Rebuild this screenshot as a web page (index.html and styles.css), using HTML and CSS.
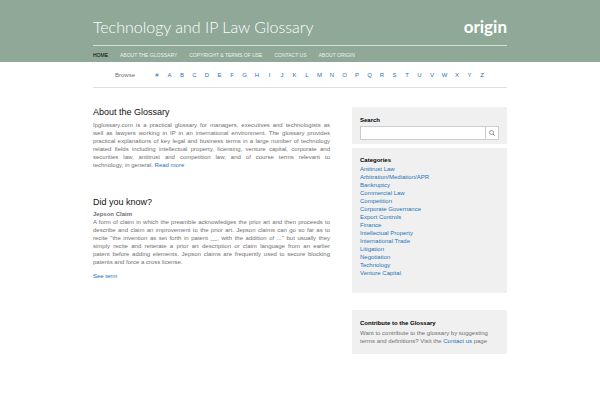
FILE: index.html
```
<!DOCTYPE html>
<html lang="en">
<head>
  <meta charset="UTF-8">
  <title>Technology and IP Law Glossary</title>
  <meta name="viewport" content="width=device-width, initial-scale=1.0">
  <link rel="stylesheet" href="styles.css">
</head>
<body>

  <header class="header">
    <div class="container">
      <div class="brand">
        <h1 class="title">Technology and IP Law Glossary</h1>
        <a class="logo" href="#">origin</a>
      </div>
      <nav class="menu">
        <a class="active" href="#">Home</a>
        <a href="#">About the Glossary</a>
        <a href="#">Copyright &amp; Terms of Use</a>
        <a href="#">Contact Us</a>
        <a href="#">About Origin</a>
      </nav>
    </div>
  </header>

  <div class="container">
    <nav class="browse">
      <span class="browse-label">Browse</span>
      <div class="letters">
        <a href="#">#</a>
        <a href="#">A</a>
        <a href="#">B</a>
        <a href="#">C</a>
        <a href="#">D</a>
        <a href="#">E</a>
        <a href="#">F</a>
        <a href="#">G</a>
        <a href="#">H</a>
        <a href="#">I</a>
        <a href="#">J</a>
        <a href="#">K</a>
        <a href="#">L</a>
        <a href="#">M</a>
        <a href="#">N</a>
        <a href="#">O</a>
        <a href="#">P</a>
        <a href="#">Q</a>
        <a href="#">R</a>
        <a href="#">S</a>
        <a href="#">T</a>
        <a href="#">U</a>
        <a href="#">V</a>
        <a href="#">W</a>
        <a href="#">X</a>
        <a href="#">Y</a>
        <a href="#">Z</a>
      </div>
    </nav>

    <div class="columns">
      <main class="content">
        <section class="about">
          <h2>About the Glossary</h2>
          <p>Ipglossary.com is a practical glossary for managers, executives and technologists as well&nbsp;as&nbsp;lawyers working in IP in an international environment. The glossary provides practical explanations of key legal and business terms in a large number of technology related&nbsp;fields including intellectual property, licensing, venture capital, corporate and securities&nbsp;law, antitrust and competition law, and of course terms relevant to technology,&nbsp;in&nbsp;general.&nbsp;<a href="#">Read&nbsp;more</a></p>
        </section>

        <section>
          <h2>Did you know?</h2>
          <h3>Jepson Claim</h3>
          <p>A form of claim in which the preamble acknowledges the prior art and then proceeds to describe and claim an improvement to the prior art. Jepson claims can go so far as to recite "the invention as set forth in patent __, with the addition of ..." but usually they simply recite and reiterate a prior art description or claim language from an earlier patent&nbsp;before&nbsp;adding elements. Jepson claims are frequently used to secure blocking patents&nbsp;and&nbsp;force a cross license.</p>
          <a class="see-term" href="#">See term</a>
        </section>
      </main>

      <aside class="sidebar">
        <form class="box search">
          <label class="box-title" for="search">Search</label>
          <div class="search-row">
            <input type="text" id="search" name="s">
            <button type="submit" aria-label="Search">
              <svg viewBox="0 0 12 12" width="6" height="6" fill="none" stroke="#777" stroke-width="1.4">
                <circle cx="5" cy="5" r="4"></circle>
                <path d="M8 8 L11.3 11.3" stroke-width="2"></path>
              </svg>
            </button>
          </div>
        </form>

        <div class="box categories">
          <h4 class="box-title">Categories</h4>
          <ul>
            <li><a href="#">Antitrust Law</a></li>
            <li><a href="#">Arbitration/Mediation/APR</a></li>
            <li><a href="#">Bankruptcy</a></li>
            <li><a href="#">Commercial Law</a></li>
            <li><a href="#">Competition</a></li>
            <li><a href="#">Corporate Governance</a></li>
            <li><a href="#">Export Controls</a></li>
            <li><a href="#">Finance</a></li>
            <li><a href="#">Intellectual Property</a></li>
            <li><a href="#">International Trade</a></li>
            <li><a href="#">Litigation</a></li>
            <li><a href="#">Negotiation</a></li>
            <li><a href="#">Technology</a></li>
            <li><a href="#">Venture Capital</a></li>
          </ul>
        </div>

        <div class="box">
          <h4 class="box-title">Contribute to the Glossary</h4>
          <p>Want to contribute to the glossary by suggesting terms and definitions? Visit the <a href="#">Contact us</a> page</p>
        </div>
      </aside>
    </div>
  </div>

</body>
</html>
```
FILE: styles.css
```
* {
  box-sizing: border-box;
}

body {
  margin: 0;
  background: #fff;
  color: #707070;
  font-family: "Liberation Sans", Arial, sans-serif;
  font-size: 6px;
  line-height: 8px;
}

a {
  color: #1b75bb;
  text-decoration: none;
}

h1, h2, h3, h4, p, ul {
  margin: 0;
  padding: 0;
}

.container {
  width: 69%;
  margin: 0 auto;
}

.header {
  background: #8fa898;
}

.brand {
  display: flex;
  justify-content: space-between;
  align-items: baseline;
  padding: 15px 0 6px;
  border-bottom: 1px solid #d5dfd8;
}

.title {
  color: #fff;
  font-family: "Gill Sans Light", Lato, sans-serif;
  font-size: 16px;
  font-weight: 300;
  line-height: 24px;
}

.logo {
  color: #fff;
  font-family: "Gill Sans", Lato, sans-serif;
  font-size: 17px;
  font-weight: 700;
  line-height: 24px;
}

.menu {
  display: flex;
  gap: 12px;
  padding: 5px 0 3px;
  font-size: 5px;
  text-transform: uppercase;
}

.menu a {
  color: #edf2ee;
}

.menu .active {
  color: #000;
}

.browse {
  display: flex;
  padding: 9px 19px 8px 22px;
  border-bottom: 1px solid #ddd;
}

.browse-label {
  width: 36px;
}

.letters {
  display: flex;
  flex: 1;
  justify-content: space-between;
}

.letters a {
  width: 12px;
  text-align: center;
}

.columns {
  display: flex;
  gap: 22px;
  padding-top: 19px;
}

.content {
  flex: 1;
}

.content p {
  text-align: justify;
}

.about {
  margin-bottom: 28px;
}

h2 {
  margin-bottom: 4px;
  color: #111;
  font-size: 9px;
  font-weight: 400;
  line-height: 10px;
}

h3 {
  font-size: 6px;
  line-height: 7px;
}

.see-term {
  display: block;
  margin-top: 6px;
}

.sidebar {
  width: 155px;
}

.box {
  padding: 9px 8px;
  background: #f0f0f0;
}

.box-title {
  display: block;
  margin-bottom: 2px;
  color: #000;
  font-size: 6px;
  font-weight: 700;
}

.search {
  margin-bottom: 4px;
  padding-bottom: 4px;
}

.search-row {
  display: flex;
  height: 14px;
  border: 1px solid #ccc;
  background: #fff;
}

.search-row input {
  flex: 1;
  min-width: 0;
  padding: 0 4px;
  border: 0;
  background: transparent;
  font: inherit;
}

.search-row button {
  display: flex;
  justify-content: center;
  align-items: center;
  width: 13px;
  padding: 0;
  border: 0;
  border-left: 1px solid #ccc;
  background: transparent;
}

.categories {
  margin-bottom: 17px;
  padding: 8px 8px 16px;
}

.categories .box-title {
  margin-bottom: 1px;
}

ul {
  list-style: none;
}
```
